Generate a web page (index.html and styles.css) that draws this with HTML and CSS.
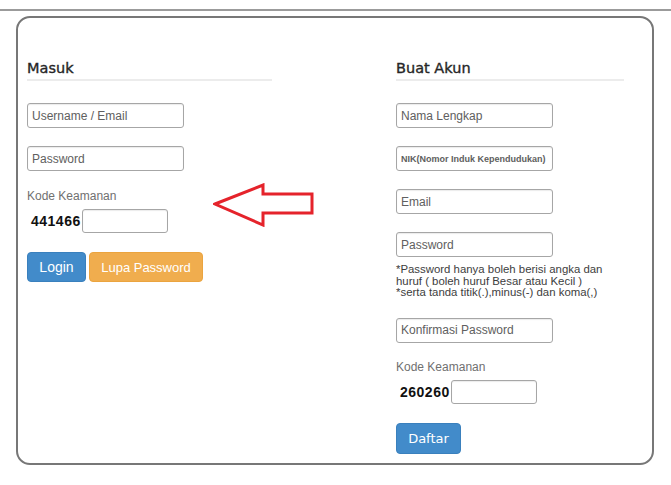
FILE: index.html
```html
<!DOCTYPE html>
<html lang="id">
<head>
<meta charset="utf-8">
<title>Masuk / Buat Akun</title>
<link rel="stylesheet" href="styles.css">
</head>
<body>
<div class="topline"></div>
<div class="card">
  <div class="cols">
    <section class="col col-left">
      <h2 class="heading">Masuk</h2>
      <div class="field first"><input class="input" type="text" placeholder="Username / Email"></div>
      <div class="field"><input class="input" type="password" placeholder="Password"></div>
      <div class="label">Kode Keamanan</div>
      <div class="captcha"><span class="code">441466</span><input class="input captcha-input" type="text"></div>
      <div class="actions"><button class="btn btn-primary btn-login">Login</button><button class="btn btn-warning btn-forgot">Lupa Password</button></div>
    </section>
    <section class="col col-right">
      <h2 class="heading">Buat Akun</h2>
      <div class="field first"><input class="input" type="text" placeholder="Nama Lengkap"></div>
      <div class="field"><input class="input input-small" type="text" placeholder="NIK(Nomor Induk Kependudukan)"></div>
      <div class="field"><input class="input" type="text" placeholder="Email"></div>
      <div class="field"><input class="input" type="password" placeholder="Password"></div>
      <p class="help">*Password hanya boleh berisi angka dan<br>huruf ( boleh huruf Besar atau Kecil )<br>*serta tanda titik(.),minus(-) dan koma(,)</p>
      <div class="field after-help"><input class="input" type="password" placeholder="Konfirmasi Password"></div>
      <div class="label label-right">Kode Keamanan</div>
      <div class="captcha"><span class="code">260260</span><input class="input captcha-input" type="text"></div>
      <div class="actions"><button class="btn btn-primary btn-daftar">Daftar</button></div>
    </section>
  </div>
  <svg class="arrow" width="102" height="44" viewBox="0 0 102 44" aria-hidden="true">
    <polygon points="2,21 50,2 50,11 99,11 99,30 50,30 50,42" fill="none" stroke="#e5232b" stroke-width="3" stroke-linejoin="miter"/>
  </svg>
</div>
</body>
</html>
```
FILE: styles.css
```css
html, body {
  margin: 0;
  padding: 0;
  background: #ffffff;
}

body {
  font-family: "Liberation Sans", Arial, sans-serif;
  color: #333333;
}

.topline {
  height: 2px;
  margin-top: 9px;
  background: #9b9b9b;
}

.card {
  position: relative;
  box-sizing: border-box;
  width: 638px;
  height: 449px;
  margin: 5px 0 0 16px;
  border: 2px solid #777777;
  border-radius: 14px;
  padding: 42px 0 0 9px;
}

.cols {
  display: grid;
  grid-template-columns: 245px 228px;
  column-gap: 124px;
  align-items: start;
}

.col {
  display: flex;
  flex-direction: column;
  align-items: flex-start;
}

.heading {
  align-self: stretch;
  margin: 0;
  font-family: "DejaVu Sans", Verdana, sans-serif;
  font-size: 14.5px;
  line-height: 17px;
  font-weight: normal;
  color: #262626;
  -webkit-text-stroke: 0.35px #262626;
  padding-bottom: 2px;
  border-bottom: 2px solid #ececec;
}

.field {
  margin-top: 18px;
}

.field.first {
  margin-top: 22px;
}

.field.after-help {
  margin-top: 19px;
}

.input {
  box-sizing: border-box;
  display: block;
  width: 157px;
  height: 25px;
  margin: 0;
  padding: 0 4px;
  border: 1px solid #a6a6a6;
  border-radius: 3px;
  background: #ffffff;
  box-shadow: inset 0 1px 1px rgba(0, 0, 0, 0.08);
  font-family: "Liberation Sans", Arial, sans-serif;
  font-size: 12px;
  color: #555555;
}

.input::placeholder {
  color: #606060;
  opacity: 1;
}

.input-small {
  font-size: 9px;
  font-weight: bold;
}

.input-small::placeholder {
  color: #5e5e5e;
}

.label {
  margin-top: 18px;
  font-size: 12px;
  line-height: 14px;
  color: #707070;
}

.label-right {
  margin-top: 17px;
}

.captcha {
  display: flex;
  align-items: center;
  margin-top: 6px;
}

.code {
  padding-left: 4px;
  width: 50px;
  font-size: 14px;
  font-weight: bold;
  letter-spacing: 0.5px;
  color: #111111;
  line-height: 16px;
}

.captcha-input {
  width: 86px;
  height: 24px;
  margin-left: 1px;
}

.help {
  margin: 7px 0 0 0;
  font-size: 11.4px;
  line-height: 11.6px;
  color: #3d3d3d;
  white-space: nowrap;
}

.actions {
  display: flex;
  gap: 3px;
  margin-top: 19px;
}

.btn {
  box-sizing: border-box;
  height: 30px;
  margin: 0;
  padding: 0;
  border-radius: 4px;
  border: 1px solid transparent;
  color: #ffffff;
  font-family: "Liberation Sans", Arial, sans-serif;
  font-size: 14px;
  text-align: center;
  cursor: pointer;
}

.btn-primary {
  background: #428bca;
  border-color: #3a80bd;
}

.btn-warning {
  background: #f0ad4e;
  border-color: #eba43f;
}

.btn-login {
  width: 59px;
}

.btn-forgot {
  width: 114px;
  font-size: 13px;
}

.btn-daftar {
  width: 65px;
  height: 31px;
  font-family: "DejaVu Sans", Verdana, sans-serif;
  font-size: 13px;
}

.arrow {
  position: absolute;
  left: 195px;
  top: 165px;
}
```
